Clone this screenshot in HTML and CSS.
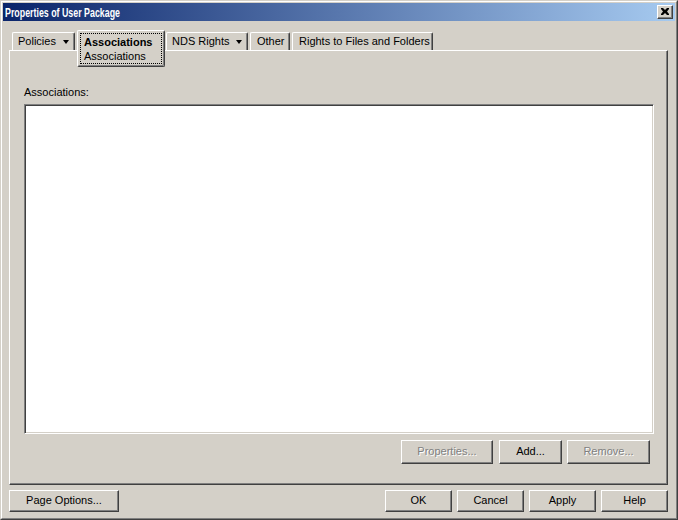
FILE: index.html
```html
<!DOCTYPE html>
<html>
<head>
<meta charset="utf-8">
<title>Properties of User Package</title>
<link rel="stylesheet" href="styles.css">
</head>
<body>
<div class="window">
  <div class="frame">
    <div class="titlebar">
      <span class="title">Properties of User Package</span>
      <span class="close">
        <svg width="8" height="7" viewBox="0 0 8 7"><path d="M0 0h2l2 2 2-2h2v1l-2 2.5 2 2.5v1h-2l-2-2-2 2h-2v-1l2-2.5-2-2.5z" fill="#000"/></svg>
      </span>
    </div>
    <div class="content">
      <div class="tabs">
        <div class="tab tab-policies">Policies<span class="arrow"></span></div>
        <div class="tab tab-selected">
          <div class="focus">
            <div class="tab-main">Associations</div>
            <div class="tab-sub">Associations</div>
          </div>
        </div>
        <div class="tab tab-nds">NDS Rights<span class="arrow"></span></div>
        <div class="tab tab-other">Other</div>
        <div class="tab tab-rights">Rights to Files and Folders</div>
      </div>
      <div class="panel">
        <div class="label">Associations:</div>
        <div class="listbox"></div>
        <div class="list-buttons">
          <div class="btn btn-disabled btn-props">Properties...</div>
          <div class="btn btn-add">Add...</div>
          <div class="btn btn-disabled btn-remove">Remove...</div>
        </div>
      </div>
      <div class="footer">
        <div class="btn btn-page">Page Options...</div>
        <div class="footer-right">
          <div class="btn btn-dlg">OK</div>
          <div class="btn btn-dlg">Cancel</div>
          <div class="btn btn-dlg">Apply</div>
          <div class="btn btn-dlg">Help</div>
        </div>
      </div>
    </div>
  </div>
</div>
</body>
</html>
```

FILE: styles.css
```css
html, body {
  margin: 0;
  padding: 0;
}
body {
  width: 678px;
  height: 520px;
  background: #d4d0c8;
  font-family: "Liberation Sans", Arial, sans-serif;
  font-size: 11px;
  color: #000;
  overflow: hidden;
}
.window {
  width: 678px;
  height: 520px;
  box-sizing: border-box;
  border: 1px solid;
  border-color: #d4d0c8 #404040 #404040 #d4d0c8;
  background: #d4d0c8;
}
.frame {
  height: 100%;
  box-sizing: border-box;
  border: 1px solid;
  border-color: #ffffff #808080 #808080 #ffffff;
  padding: 1px;
  display: flex;
  flex-direction: column;
}
.titlebar {
  height: 18px;
  flex: none;
  display: flex;
  align-items: center;
  justify-content: space-between;
  padding: 0 2px 0 2px;
  background: linear-gradient(to right, #0a246a, #a6caf0);
}
.title {
  color: #fff;
  font-family: "Liberation Sans", Arial, sans-serif;
  font-weight: bold;
  font-size: 13px;
  line-height: 15px;
  display: inline-block;
  transform: scaleX(0.68);
  transform-origin: left center;
  white-space: nowrap;
}
.close {
  width: 16px;
  height: 14px;
  box-sizing: border-box;
  background: #d4d0c8;
  border: 1px solid;
  border-color: #fff #404040 #404040 #fff;
  box-shadow: inset -1px -1px 0 #808080;
  display: flex;
  align-items: center;
  justify-content: center;
  padding: 0 1px 1px 0;
}
.close svg {
  display: block;
}
.content {
  flex: 1;
  display: flex;
  flex-direction: column;
  padding: 9px 7px 0 6px;
}
.tabs {
  height: 20px;
  flex: none;
  display: flex;
  align-items: flex-end;
  padding-left: 3px;
  position: relative;
  z-index: 1;
}
.tab {
  height: 18px;
  box-sizing: border-box;
  border-top: 1px solid #fff;
  border-left: 1px solid #fff;
  border-right: 1px solid #404040;
  box-shadow: inset -1px 0 0 #808080;
  border-radius: 2px 2px 0 0;
  display: flex;
  align-items: center;
  padding-left: 5px;
  line-height: 13px;
  white-space: nowrap;
}
.arrow {
  width: 0;
  height: 0;
  border-left: 3.5px solid transparent;
  border-right: 3.5px solid transparent;
  border-top: 4px solid #000;
  margin-left: 7px;
  margin-top: 1px;
}
.tab-policies { width: 63px; margin-right: 2px; }
.tab-nds { width: 82px; margin-right: 2px; }
.tab-other { width: 40px; margin-right: 2px; padding-left: 6px; }
.tab-rights { width: 141px; padding-left: 6px; }
.tab-selected {
  align-self: flex-start;
  width: 88px;
  height: 37px;
  margin-right: 1px;
  background: #d4d0c8;
  border-bottom: 1px solid #404040;
  box-shadow: inset -1px -1px 0 #808080;
  border-radius: 2px;
  padding: 2px 2px 2px 2px;
  align-items: stretch;
}
.focus {
  flex: 1;
  border: 1px dotted #000;
  padding: 1px 0 0 3px;
}
.tab-main {
  font-weight: bold;
  line-height: 14px;
}
.tab-sub {
  line-height: 14px;
}
.panel {
  height: 435px;
  flex: none;
  box-sizing: border-box;
  border: 1px solid;
  border-color: #fff #404040 #404040 #fff;
  box-shadow: inset -1px -1px 0 #808080;
  padding: 35px 13px 0 14px;
  display: flex;
  flex-direction: column;
}
.label {
  line-height: 13px;
  height: 13px;
}
.listbox {
  margin-top: 5px;
  height: 330px;
  box-sizing: border-box;
  background: #fff;
  border: 1px solid;
  border-color: #808080 #fff #fff #808080;
  box-shadow: inset 1px 1px 0 #404040, inset -1px -1px 0 #d4d0c8;
}
.list-buttons {
  margin-top: 6px;
  display: flex;
  justify-content: flex-end;
  gap: 5px;
  padding-right: 4px;
}
.btn {
  box-sizing: border-box;
  background: #d4d0c8;
  border: 1px solid;
  border-color: #fff #404040 #404040 #fff;
  box-shadow: inset -1px -1px 0 #808080;
  display: flex;
  align-items: center;
  justify-content: center;
  line-height: 13px;
  white-space: nowrap;
  padding-bottom: 1px;
}
.list-buttons .btn { height: 24px; }
.btn-props { width: 92px; margin-right: 1px; }
.btn-add { width: 63px; }
.btn-remove { width: 83px; }
.btn-disabled {
  color: #808080;
  text-shadow: 1px 1px 0 #fff;
}
.footer {
  margin-top: 5px;
  height: 22px;
  flex: none;
  display: flex;
  justify-content: space-between;
}
.footer .btn { height: 22px; }
.btn-page { width: 110px; }
.footer-right {
  display: flex;
  gap: 5px;
}
.btn-dlg { width: 67px; }
```
